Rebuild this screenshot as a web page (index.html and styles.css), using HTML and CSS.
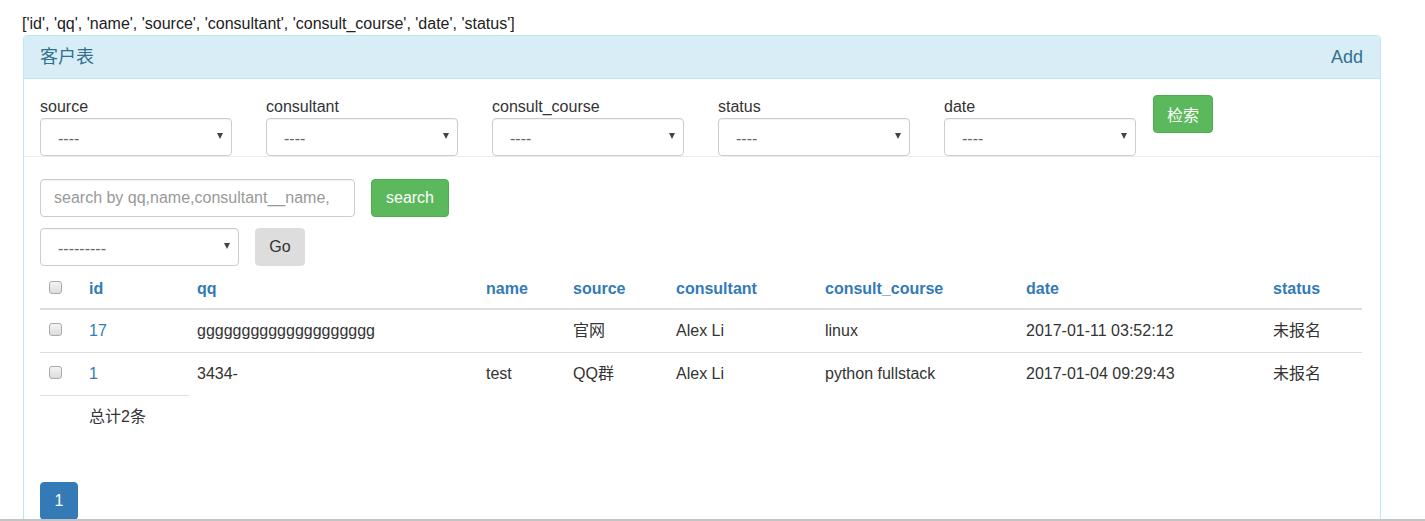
FILE: index.html
```html
<!DOCTYPE html>
<html lang="zh">
<head>
<meta charset="utf-8">
<title>客户表</title>
<link rel="stylesheet" href="styles.css">
</head>
<body>
<div class="page">
  <div class="fields-line">['id', 'qq', 'name', 'source', 'consultant', 'consult_course', 'date', 'status']</div>
  <div class="panel">
    <div class="panel-heading">
      <span class="panel-title">客户表</span>
      <a class="add-link" href="#">Add</a>
    </div>
    <form class="filter-form">
      <div class="filter-group">
        <label class="filter-label">source</label>
        <div class="select-wrap"><select class="select"><option>----</option></select></div>
      </div>
      <div class="filter-group">
        <label class="filter-label">consultant</label>
        <div class="select-wrap"><select class="select"><option>----</option></select></div>
      </div>
      <div class="filter-group">
        <label class="filter-label">consult_course</label>
        <div class="select-wrap"><select class="select"><option>----</option></select></div>
      </div>
      <div class="filter-group">
        <label class="filter-label">status</label>
        <div class="select-wrap"><select class="select"><option>----</option></select></div>
      </div>
      <div class="filter-group filter-group-last">
        <label class="filter-label">date</label>
        <div class="select-wrap"><select class="select"><option>----</option></select></div>
      </div>
      <button type="button" class="btn btn-success btn-filter">检索</button>
    </form>
    <div class="panel-body">
      <div class="search-row">
        <input class="search-input" type="text" placeholder="search by qq,name,consultant__name,">
        <button type="button" class="btn btn-success btn-search">search</button>
      </div>
      <div class="action-row">
        <div class="select-wrap action-select"><select class="select"><option>---------</option></select></div>
        <button type="button" class="btn btn-go">Go</button>
      </div>
      <table class="data-table">
        <colgroup>
          <col class="c-check"><col class="c-id"><col class="c-qq"><col class="c-name"><col class="c-source"><col class="c-consultant"><col class="c-course"><col class="c-date"><col class="c-status">
        </colgroup>
        <thead>
          <tr>
            <th><input type="checkbox" class="cb"></th>
            <th><a href="#">id</a></th>
            <th><a href="#">qq</a></th>
            <th><a href="#">name</a></th>
            <th><a href="#">source</a></th>
            <th><a href="#">consultant</a></th>
            <th><a href="#">consult_course</a></th>
            <th><a href="#">date</a></th>
            <th><a href="#">status</a></th>
          </tr>
        </thead>
        <tbody>
          <tr>
            <td><input type="checkbox" class="cb"></td>
            <td><a href="#">17</a></td>
            <td>gggggggggggggggggggg</td>
            <td></td>
            <td>官网</td>
            <td>Alex Li</td>
            <td>linux</td>
            <td>2017-01-11 03:52:12</td>
            <td>未报名</td>
          </tr>
          <tr>
            <td><input type="checkbox" class="cb"></td>
            <td><a href="#">1</a></td>
            <td>3434-</td>
            <td>test</td>
            <td>QQ群</td>
            <td>Alex Li</td>
            <td>python fullstack</td>
            <td>2017-01-04 09:29:43</td>
            <td>未报名</td>
          </tr>
          <tr>
            <td></td>
            <td>总计2条</td>
          </tr>
        </tbody>
      </table>
      <nav class="pagination">
        <a class="page-item active" href="#">1</a>
      </nav>
    </div>
  </div>
</div>
</body>
</html>
```

FILE: styles.css
```css
* {
  box-sizing: border-box;
}

html, body {
  margin: 0;
  padding: 0;
  background: #fff;
}

body {
  font-family: "Liberation Sans", Arial, "Noto Sans CJK SC", sans-serif;
  font-size: 16px;
  color: #333;
}

a {
  color: #337ab7;
  text-decoration: none;
}

.page {
  height: 521px;
  overflow: hidden;
  border-bottom: 2px solid #c4c4c4;
  padding: 12px 0 0 22px;
}

.fields-line {
  line-height: 23px;
  color: #222;
}

.panel {
  margin-left: 1px;
  width: 1358px;
  border: 1px solid #bce8f1;
  border-radius: 4px;
  background: #fff;
  height: 600px;
}

.panel-heading {
  display: flex;
  justify-content: space-between;
  align-items: center;
  background: #d9edf7;
  border-bottom: 1px solid #bce8f1;
  border-radius: 3px 3px 0 0;
  padding: 9px 17px 9px 16px;
  line-height: 24px;
  font-size: 18px;
  color: #31708f;
}

.add-link {
  color: #31708f;
}

.filter-form {
  display: flex;
  align-items: flex-start;
  margin: 0;
  padding: 16px 17px 0 16px;
  border-bottom: 1px solid #eee;
}

.filter-group {
  width: 192px;
  margin-right: 34px;
  display: flex;
  flex-direction: column;
}

.filter-group-last {
  margin-right: 17px;
}

.filter-label {
  line-height: 23px;
  color: #333;
}

.select-wrap {
  position: relative;
  width: 100%;
}

.select-wrap::after {
  content: "";
  position: absolute;
  right: 9px;
  top: 15px;
  border-left: 3.5px solid transparent;
  border-right: 3.5px solid transparent;
  border-top: 6px solid #444;
  pointer-events: none;
}

.select {
  appearance: none;
  -webkit-appearance: none;
  width: 100%;
  height: 38px;
  border: 1px solid #ccc;
  border-radius: 4px;
  background: #fff;
  padding: 2px 0 0 17px;
  font-family: inherit;
  font-size: 16px;
  color: #666;
  box-shadow: inset 0 1px 1px rgba(0, 0, 0, 0.05);
  margin: 0;
}

.btn {
  display: inline-flex;
  align-items: center;
  justify-content: center;
  height: 38px;
  border: 1px solid transparent;
  border-radius: 4px;
  font-family: inherit;
  font-size: 16px;
  padding: 0;
  margin: 0;
  cursor: pointer;
}

.btn-success {
  background: #5cb85c;
  border-color: #4cae4c;
  color: #fff;
}

.btn-filter {
  width: 60px;
  font-family: "Noto Sans CJK SC", "Liberation Sans", sans-serif;
}

.panel-body {
  padding: 22px 17px 0 16px;
}

.search-row {
  display: flex;
  gap: 16px;
}

.search-input {
  width: 315px;
  height: 38px;
  border: 1px solid #ccc;
  border-radius: 4px;
  padding: 0 13px;
  font-family: inherit;
  font-size: 16px;
  color: #555;
  box-shadow: inset 0 1px 1px rgba(0, 0, 0, 0.05);
  margin: 0;
}

.search-input::placeholder {
  color: #999;
}

.btn-search {
  width: 78px;
}

.action-row {
  display: flex;
  gap: 16px;
  margin-top: 11px;
}

.action-select {
  width: 199px;
}

.btn-go {
  width: 50px;
  background: #ddd;
  border-color: #ddd;
  color: #333;
}

.data-table {
  margin-top: 4px;
  width: 1322px;
  table-layout: fixed;
  border-collapse: collapse;
  border-spacing: 0;
}

.c-check { width: 41px; }
.c-id { width: 108px; }
.c-qq { width: 289px; }
.c-name { width: 87px; }
.c-source { width: 103px; }
.c-consultant { width: 149px; }
.c-course { width: 201px; }
.c-date { width: 247px; }
.c-status { width: 97px; }

.data-table th {
  text-align: left;
  font-weight: bold;
  padding: 8px 8px;
  line-height: 22px;
  border-bottom: 2px solid #ddd;
  vertical-align: top;
}

.data-table td {
  padding: 10px 8px;
  line-height: 22px;
  border-top: 1px solid #ddd;
  vertical-align: top;
  white-space: nowrap;
}

.data-table tbody tr:first-child td {
  border-top: 0;
}

.cb {
  appearance: none;
  -webkit-appearance: none;
  display: block;
  width: 13px;
  height: 13px;
  margin: 3px 0 0 1px;
  border: 1px solid #aaa;
  border-radius: 3px;
  background: linear-gradient(#f4f4f4, #dcdcdc);
}

.pagination {
  margin-top: 44px;
  display: flex;
}

.page-item {
  display: flex;
  align-items: center;
  justify-content: center;
  width: 38px;
  height: 38px;
  border-radius: 4px;
  background: #337ab7;
  border: 1px solid #337ab7;
  color: #fff;
  font-size: 16px;
}
```
